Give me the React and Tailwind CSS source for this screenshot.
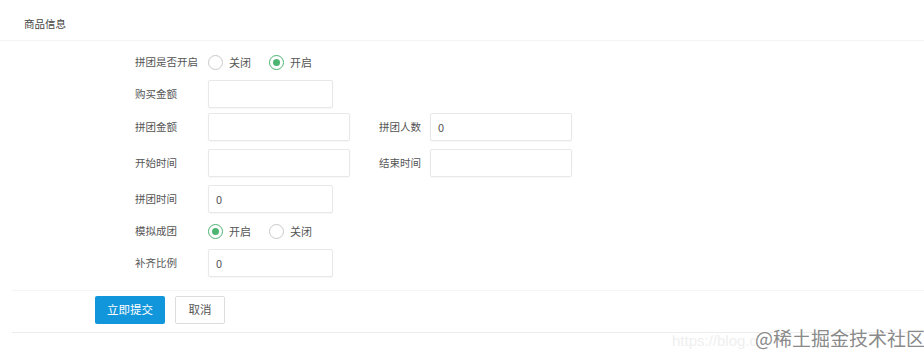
import React from "react";

const font = { fontFamily: '"Noto Sans CJK SC", "Noto Sans", sans-serif' };

function Radio({ checked, label }) {
  return (
    <label className="flex items-center gap-[6px] mr-[18px] cursor-pointer">
      <span
        className={
          "w-[15px] h-[15px] rounded-full border flex items-center justify-center bg-white " +
          (checked ? "border-[#4cb572]" : "border-[#c9c9c9]")
        }
      >
        {checked && <span className="w-[7px] h-[7px] rounded-full bg-[#4cb572]" />}
      </span>
      <span className="text-[11px] text-[#555]">{label}</span>
    </label>
  );
}

function Input({ value = "", wide }) {
  return (
    <div
      className={
        "h-[28px] border border-[#e8e8e8] rounded-[2px] bg-white flex items-center px-[7px] text-[11px] text-[#555] shadow-[0_1px_2px_rgba(0,0,0,0.04)] " +
        (wide ? "w-[142px]" : "w-[125px]")
      }
    >
      {value}
    </div>
  );
}

function Label({ children, w = "w-[73px]" }) {
  return <div className={"text-[10.5px] text-[#555] shrink-0 " + w}>{children}</div>;
}

export default function App() {
  return (
    <div className="relative w-[924px] h-[352px] bg-white overflow-hidden" style={font}>
      {/* Header */}
      <div className="h-[41px] pl-[24px] pt-[15px] border-b border-[#f4f4f4]">
        <div className="text-[10.5px] text-[#444] leading-[18px]">商品信息</div>
      </div>

      {/* Form */}
      <div className="pl-[135px]">
        <div className="flex items-center h-[28px] mt-[7px]">
          <Label>拼团是否开启</Label>
          <Radio label="关闭" />
          <Radio checked label="开启" />
        </div>
        <div className="flex items-center mt-[4px]">
          <Label>购买金额</Label>
          <Input />
        </div>
        <div className="flex items-center mt-[5px]">
          <Label>拼团金额</Label>
          <Input wide />
          <div className="w-[29px]" />
          <Label w="w-[51px]">拼团人数</Label>
          <Input wide value="0" />
        </div>
        <div className="flex items-center mt-[8px]">
          <Label>开始时间</Label>
          <Input wide />
          <div className="w-[29px]" />
          <Label w="w-[51px]">结束时间</Label>
          <Input wide />
        </div>
        <div className="flex items-center mt-[8px]">
          <Label>拼团时间</Label>
          <Input value="0" />
        </div>
        <div className="flex items-center h-[28px] mt-[4px]">
          <Label>模拟成团</Label>
          <Radio checked label="开启" />
          <Radio label="关闭" />
        </div>
        <div className="flex items-center mt-[4px]">
          <Label>补齐比例</Label>
          <Input value="0" />
        </div>
      </div>

      {/* Actions */}
      <div className="mt-[13px] ml-[12px] border-t border-[#f5f5f5] border-b border-b-[#ececec] h-[43px] pl-[83px] pt-[5px] flex gap-[10px]">
        <button className="w-[70px] h-[28px] bg-[#1296db] text-white text-[11.5px] rounded-[2px]">
          立即提交
        </button>
        <button className="w-[50px] h-[28px] bg-white border border-[#dcdcdc] text-[#555] text-[11.5px] rounded-[2px]">
          取消
        </button>
      </div>

      {/* Watermark */}
      <div className="absolute left-[672px] top-[324px] flex items-baseline whitespace-nowrap">
        <span className="text-[15px] text-[#efefef]" style={{ fontFamily: '"Liberation Sans", sans-serif' }}>
          https://blog.c
        </span>
        <span className="text-[19px] text-[#8a8a8a] -ml-[2px]" style={{ textShadow: "0 0 2px #fff, 0 0 2px #fff" }}>
          @稀土掘金技术社区
        </span>
      </div>
    </div>
  );
}
